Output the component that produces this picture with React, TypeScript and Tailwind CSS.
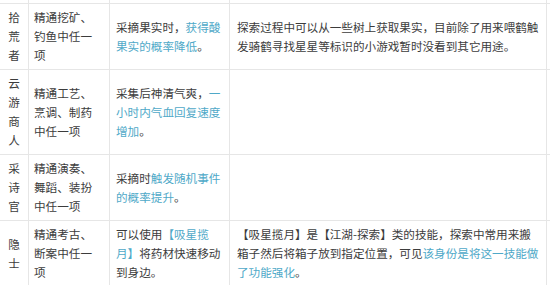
import type { ReactNode } from "react"

type Row = {
  role: string
  skill: string
  effect: ReactNode
  note: ReactNode
}

const Hl = ({ children }: { children: ReactNode }) => (
  <span className="text-[#4fa9c8]">{children}</span>
)

const rows: Row[] = [
  {
    role: "拾荒者",
    skill: "精通挖矿、钓鱼中任一项",
    effect: <>采摘果实时，<Hl>获得酸果实的概率降低</Hl>。</>,
    note: "探索过程中可以从一些树上获取果实，目前除了用来喂鹤触发骑鹤寻找星星等标识的小游戏暂时没看到其它用途。",
  },
  {
    role: "云游商人",
    skill: "精通工艺、烹调、制药中任一项",
    effect: <>采集后神清气爽，<Hl>一小时内气血回复速度增加</Hl>。</>,
    note: "",
  },
  {
    role: "采诗官",
    skill: "精通演奏、舞蹈、装扮中任一项",
    effect: <>采摘时<Hl>触发随机事件的概率提升</Hl>。</>,
    note: "",
  },
  {
    role: "隐士",
    skill: "精通考古、断案中任一项",
    effect: <>可以使用<Hl>【吸星揽月】</Hl>将药材快速移动到身边。</>,
    note: (
      <>
        【吸星揽月】是【江湖-探索】类的技能，探索中常用来搬箱子然后将箱子放到指定位置，可见
        <Hl>该身份是将这一技能做了功能强化</Hl>。
      </>
    ),
  },
]

const grid = "grid grid-cols-[29px_81px_120px_317px] border-b border-[#e6e6e6]"
const cell = "flex items-center border-r border-[#e6e6e6] py-[4px]"

export default function App() {
  return (
    <div
      className="w-[550px] h-[285px] overflow-hidden bg-white text-[11.6px] leading-[19px] text-[#3c3c3c]"
      style={{ fontFamily: '"Noto Sans CJK SC", "Noto Sans", sans-serif' }}
    >
      {/* tail of the row above, cut off */}
      <div className={grid}>
        <div className="h-[3px] border-r border-[#e6e6e6]" />
        <div className="h-[3px] border-r border-[#e6e6e6]" />
        <div className="h-[3px] border-r border-[#e6e6e6]" />
        <div className="h-[3px] border-r border-[#e6e6e6]" />
      </div>

      {rows.map((r) => (
        <div key={r.role} className={grid}>
          <div className={`${cell} justify-center px-[7px] text-center`}>{r.role}</div>
          <div className={`${cell} pl-[5px] pr-[10px]`}>{r.skill}</div>
          <div className={`${cell} pl-[6px] pr-[6px]`}>
            <p>{r.effect}</p>
          </div>
          <div className={`${cell} pl-[7px] pr-[6px]`}>
            <p>{r.note}</p>
          </div>
        </div>
      ))}
    </div>
  )
}
